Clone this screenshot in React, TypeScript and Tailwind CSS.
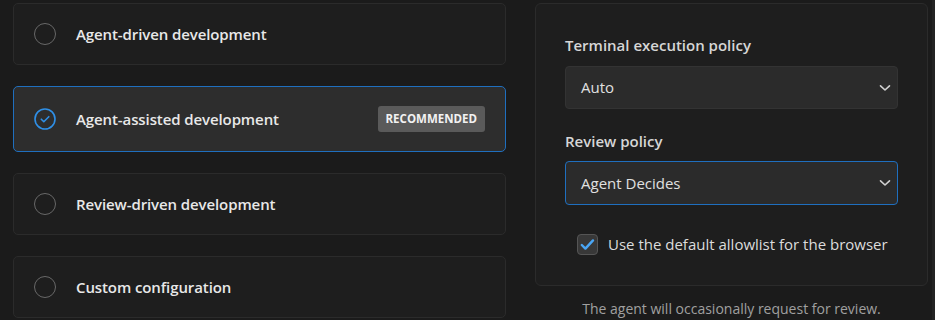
import React from 'react';

const font = { fontFamily: '"Open Sans", "Noto Sans", sans-serif' };

interface ModeCardProps {
  title: string;
  selected?: boolean;
  badge?: string;
}

const ModeCard: React.FC<ModeCardProps> = ({ title, selected, badge }) => {
  return (
    <div
      className={
        selected
          ? 'h-[66px] flex items-center rounded-[5px] border border-[#1f6fbf] bg-[#2d2d2d] pl-[20px] pr-[20px]'
          : 'h-[62px] flex items-center rounded-[5px] border border-[#2b2b2b] bg-[#1e1e1e] pl-[20px] pr-[20px]'
      }
    >
      {selected ? (
        <svg width="22" height="22" viewBox="0 0 22 22" className="shrink-0">
          <circle cx="11" cy="11" r="10" fill="none" stroke="#2f8fe6" strokeWidth="1.6" />
          <path d="M7.3 11.2l2.5 2.5 5-5" fill="none" stroke="#2f8fe6" strokeWidth="1.6" strokeLinecap="round" strokeLinejoin="round" />
        </svg>
      ) : (
        <div className="w-[22px] h-[22px] shrink-0 rounded-full border-[1.5px] border-[#686868]" />
      )}
      <span className="ml-[20px] text-[15px] font-semibold text-[#e8e8e8] tracking-[-0.1px]">{title}</span>
      {badge && (
        <span className="ml-auto h-[26px] px-[8px] flex items-center rounded-[3px] bg-[#5a5a5a] text-[11.5px] font-bold text-[#f2f2f2]">
          {badge}
        </span>
      )}
    </div>
  );
};

const Chevron = () => (
  <svg width="12" height="8" viewBox="0 0 12 8" className="shrink-0">
    <path d="M1.5 1.8l4.5 4.2 4.5-4.2" fill="none" stroke="#d0d0d0" strokeWidth="1.6" strokeLinecap="round" strokeLinejoin="round" />
  </svg>
);

const SelectBox: React.FC<{ value: string; focused?: boolean; height: string }> = ({ value, focused, height }) => (
  <div
    className={
      (focused ? 'border-[#1f6fbf] ' : 'border-[#333333] ') +
      height +
      ' flex items-center justify-between rounded-[4px] border bg-[#2b2b2b] pl-[15px] pr-[6px]'
    }
  >
    <span className="text-[15px] text-[#e0e0e0]">{value}</span>
    <Chevron />
  </div>
);

export default function App() {
  return (
    <div style={font} className="w-[935px] h-[320px] overflow-hidden bg-[#1b1b1b] flex pl-[13px] pt-[3px] relative">
      <div className="w-[493px] flex flex-col gap-[21px] shrink-0">
        <ModeCard title="Agent-driven development" />
        <ModeCard title="Agent-assisted development" selected badge="RECOMMENDED" />
        <ModeCard title="Review-driven development" />
        <ModeCard title="Custom configuration" />
      </div>

      <div className="ml-[29px] w-[393px] shrink-0 flex flex-col">
        <div className="rounded-[6px] border border-[#2b2b2b] bg-[#1e1e1e] pt-[30px] px-[29px] pb-[30px]">
          <div className="h-[22px] flex items-center text-[15px] font-semibold text-[#d6d6d6] mb-[10px]">
            Terminal execution policy
          </div>
          <SelectBox value="Auto" height="h-[43px]" />
          <div className="h-[22px] flex items-center text-[15px] font-semibold text-[#d6d6d6] mt-[21px] mb-[9px]">
            Review policy
          </div>
          <SelectBox value="Agent Decides" focused height="h-[44px]" />
          <div className="mt-[29px] pl-[12px] flex items-center h-[21px]">
            <div className="w-[21px] h-[21px] rounded-[4px] border border-[#555555] bg-[#383838] flex items-center justify-center">
              <svg width="15" height="13" viewBox="0 0 15 13">
                <path d="M1.8 7l3.6 3.6 7.6-8.2" fill="none" stroke="#4aa6f5" strokeWidth="2.4" strokeLinecap="round" strokeLinejoin="round" />
              </svg>
            </div>
            <span className="ml-[10px] text-[15px] text-[#dcdcdc]">Use the default allowlist for the browser</span>
          </div>
        </div>
        <div className="mt-[12px] h-[20px] flex items-center justify-center text-[14px] text-[#a0a0a0]">
          The agent will occasionally request for review.
        </div>
      </div>

      <div className="absolute right-0 top-0 w-[3px] h-full bg-[#232323]" />
    </div>
  );
}
